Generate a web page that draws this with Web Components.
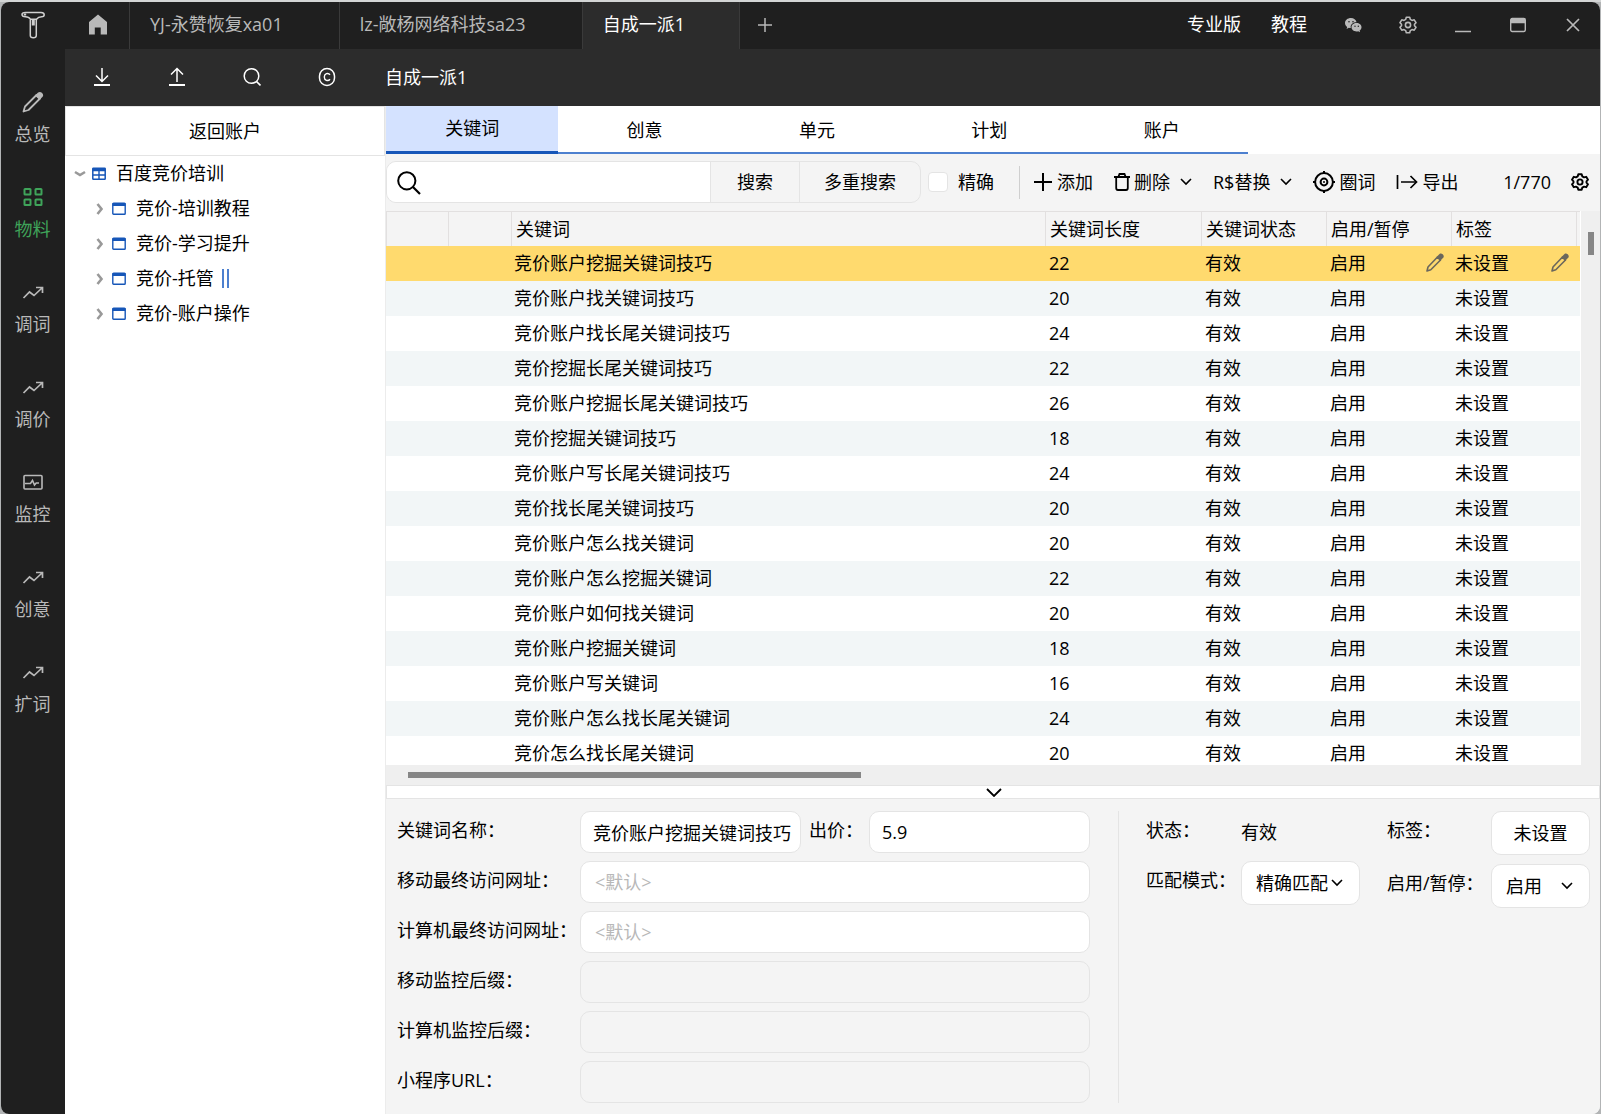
<!DOCTYPE html>
<html lang="zh-CN">
<head>
<meta charset="utf-8">
<title>自成一派1</title>
<style>
  :root {
    --bar: #1f1f1f; --bar-2: #2c2c2c; --bar-text: #b9b9b9;
    --green: #3fa45a; --blue: #1656b8; --blue-soft: #4d80cf;
    --panel: #f4f4f4; --line: #e4e4e4; --select: #ffda6e; --stripe: #f2f6f7;
  }
  html, body { margin: 0; height: 100%; background: #cfd0d0; }
  body { font: 18px/24px "Open Sans", "Noto Sans CJK SC", sans-serif; color: #000; }
</style>
</head>
<body>
<app-window></app-window>

<script>
const RESET = `
  *, *::before, *::after { box-sizing: border-box; }
  :host { display: block; box-sizing: border-box; }
  :host([hidden]) { display: none; }
  button, input, select { font: inherit; color: inherit; margin: 0; padding: 0; border: 0; background: none; border-radius: 0; outline: 0; }
  button { cursor: pointer; }
`;

function define(name, css, html, setup) {
  const template = document.createElement('template');
  customElements.define(name, class extends HTMLElement {
    constructor() {
      super();
      this.attachShadow({ mode: 'open' });
    }
    connectedCallback() {
      if (this.shadowRoot.childNodes.length) return;
      template.innerHTML = `<style>${RESET}${css}</style>${typeof html === 'function' ? html(this) : html}`;
      this.shadowRoot.append(template.content.cloneNode(true));
      if (setup) setup(this);
    }
  });
}

/* Each icon: [width, height, markup] */
const GEAR = '<path d="M7.3 1.2h3.4l.6 2.2 1.7 1 2.2-.6 1.8 2.9-1.5 1.6v1.4l1.5 1.6-1.8 2.9-2.2-.6-1.7 1-.6 2.2H7.3l-.6-2.2-1.7-1-2.2.6L1 11.300l1.500-1.600V8.300L1 6.700l1.800-2.900 2.200.6 1.700-1z" stroke-linejoin="round"/><circle cx="9" cy="9" r="2.600"/>';
const ICONS = {
  logo: [24, 28, '<path d="M1 3.500C1 1.500 3 1.500 4.500 1.500H20c2.500 0 3.200 1.200 3.200 2.300 0 1.300-1 2-2.500 2-3.200 0-4.200 1-5.200 2.400H9.300C8.300 6.500 7 5.800 4.500 5.800 2.500 5.800 1 5.500 1 3.500z" stroke-width="1.500"/><path d="M2.800 3.600h2.400" stroke-width="2"/><path d="M9.300 9v15.500c0 3 6 3 6 0V9" stroke-width="1.500"/><path d="M12.300 9v5.500" stroke-width="3"/>'],
  home: [20, 21, '<path d="M10 .5 1 8v12.500h5.800V13.500h5.900v7H19V8z" fill="currentColor" stroke="none"/>'],
  pencil: [22, 22, '<path d="M1.500 20.500 3 15.500 14.500 4l3.500 3.500L6.500 19z" stroke-width="1.800" stroke-linejoin="round"/><path d="m13 4.500 3.100-3c2.500-2 6.500 1.500 4.500 4.200L17.500 9z" fill="currentColor" stroke="none"/>'],
  pen: [18, 19, '<path d="M1 18 2 14 11.500 4l3 3L4.800 16.800z" stroke-width="1.600" stroke-linejoin="round"/><path d="m10.500 4 3-3c2-1.600 5.300 1.200 3.900 3.600L14 8z" fill="currentColor" stroke="none"/>'],
  grid: [22, 22, '<g stroke-width="2"><rect x="2.500" y="3" width="6" height="5.500" rx=".6"/><rect x="13.500" y="3" width="6" height="5.500" rx=".6"/><rect x="2.500" y="13.500" width="6" height="5.500" rx=".6"/><rect x="13.500" y="13.500" width="6" height="5.500" rx=".6"/></g>'],
  trend: [22, 22, '<path d="m1.500 17 6-6 4.500 3.500L20 7M14 6.500h6.500V12" stroke-width="1.700"/>'],
  monitor: [22, 22, '<rect x="2" y="4.500" width="18" height="13.500" rx="1" stroke-width="1.600"/><path d="M3 12.500h5.500l2-3 2 4.500 1.700-2H17" stroke-width="1.600"/>'],
  plusThin: [14, 14, '<path d="M7 0v14M0 7h14" stroke-width="1.500"/>'],
  wechat: [18, 16, '<path d="M7 1C3.600 1 1 3.200 1 6c0 1.600.9 3 2.200 3.900L2.600 12l2.300-1.200c.6.100 1.200.2 1.900.2C6 7.500 9 5 12.600 5.200 12 2.800 9.800 1 7 1z" fill="currentColor" stroke="none"/><path d="M12.500 6c-2.800 0-5 1.900-5 4.200s2.200 4.200 5 4.200c.6 0 1.200-.1 1.700-.2l1.900 1-.5-1.700c1.200-.8 1.900-2 1.900-3.300 0-2.300-2.200-4.200-5-4.200z" fill="currentColor" stroke="none"/><g fill="#1f1f1f" stroke="none"><circle cx="5" cy="4.800" r=".8"/><circle cx="9" cy="4.800" r=".8"/><circle cx="11" cy="9.200" r=".7"/><circle cx="14.300" cy="9.200" r=".7"/></g>'],
  gear: [18, 18, `<g stroke-width="1.600">${GEAR}</g>`],
  gearBold: [18, 18, `<g stroke-width="1.900">${GEAR}</g>`],
  minimize: [16, 16, '<path d="M0 14.500h16" stroke-width="1.300"/>'],
  maximize: [16, 16, '<rect x=".7" y="1.500" width="14.600" height="13" rx="1.500" stroke-width="1.400"/><path d="M1 1.500h14v4.700H1z" fill="currentColor" stroke="none"/>'],
  close: [14, 14, '<path d="m1 1 12 12M13 1 1 13" stroke-width="1.700"/>'],
  download: [18, 20, '<path d="M9 1v13M3 8.500l6 6 6-6" stroke-width="1.500"/><path d="M1 18h16" stroke-width="1.800"/>'],
  upload: [18, 20, '<path d="M9 15V2M3 7.500l6-6 6 6" stroke-width="1.500"/><path d="M1 18h16" stroke-width="1.800"/>'],
  search: [18, 20, '<circle cx="8.500" cy="9" r="7.300" stroke-width="1.500"/><path d="m13.500 14.500 4 4" stroke-width="1.700"/>'],
  copyright: [18, 20, '<rect x="1.500" y="1.500" width="15" height="17" rx="7.500" stroke-width="1.500"/><path d="M12 7.800c-2-2.600-5.700-1.200-5.700 2.200s3.700 4.800 5.700 2.200" stroke-width="1.400"/>'],
  searchBold: [24, 24, '<circle cx="9.800" cy="9.800" r="8.600" stroke-width="2"/><path d="m16 16 7 7" stroke-width="2.200"/>'],
  plus: [18, 18, '<path d="M9 0v18M0 9h18" stroke-width="2"/>'],
  trash: [16, 18, '<path d="M0 4h16" stroke-width="1.800"/><path d="M4.500 3.500 5.500 1h5l1 2.500M2.200 4.500V15c0 1.300.5 2 1.800 2h8c1.300 0 1.800-.7 1.800-2V4.500" stroke-width="1.800"/>'],
  chevron: [12, 8, '<path d="m1 1 5 5 5-5" stroke-width="1.600"/>'],
  chevronWide: [16, 9, '<path d="m1 1 7 7 7-7" stroke-width="1.800"/>'],
  target: [22, 22, '<circle cx="11" cy="11" r="8.900" stroke-width="2"/><circle cx="11" cy="11" r="3.400" stroke-width="2"/><path d="M11 0v3M11 19v3M0 11h3M19 11h3" stroke-width="2"/><circle cx="11" cy="11" r="1" fill="currentColor" stroke="none"/>'],
  export: [22, 16, '<path d="M1.500 1v14M5 8h15" stroke-width="1.700"/><path d="m14.500 2 6 6-6 6" stroke-width="1.700"/>'],
  treeOpen: [12, 8, '<path d="m1 2 5 3 5-3" stroke-width="2.600"/>'],
  treeClosed: [8, 12, '<path d="m1.500 1 4 5-4 5" stroke-width="2.600"/>'],
  table: [14, 14, '<rect x=".8" y="1.300" width="12.400" height="11" rx=".6" stroke-width="1.500"/><path d="M.5 1h13v3.200H.5z" fill="currentColor" stroke="none"/><path d="M7 3v9M1 8h12" stroke-width="1.400"/>'],
  folder: [14, 14, '<rect x=".8" y="1.300" width="12.400" height="11" rx=".8" stroke-width="1.400"/><path d="M.5 1h13v3H.5z" fill="currentColor" stroke="none"/>'],
};

define('ui-icon', `:host { display: inline-block; flex: none; } svg { display: block; }`, el => {
  const [w, h, body] = ICONS[el.getAttribute('name')];
  return `<svg width="${w}" height="${h}" viewBox="0 0 ${w} ${h}" fill="none" stroke="currentColor" aria-hidden="true">${body}</svg>`;
});

/* ---------- window ---------- */
define('app-window', `
  :host { height: 100vh; padding: 2px 1px 0; background: linear-gradient(#d3d5d5 2px, #b2b4b5 2px); }
  .frame { height: 100%; display: grid; grid-template: auto auto minmax(0, 1fr) / 64px 320px minmax(0, 1fr); border-radius: 8px; overflow: hidden; background: var(--panel); }
  side-nav { grid-row: 1 / -1; }
  title-bar, tool-bar { grid-column: 2 / -1; }
  main { display: flex; flex-direction: column; min-width: 0; min-height: 0; border-left: 1px solid #ececec; background: var(--panel); }
  keyword-table { flex: 1; min-height: 0; }
`, `
  <div class="frame">
    <side-nav></side-nav>
    <title-bar></title-bar>
    <tool-bar></tool-bar>
    <account-tree></account-tree>
    <main>
      <entity-tabs></entity-tabs>
      <action-bar></action-bar>
      <keyword-table></keyword-table>
      <split-handle></split-handle>
      <detail-panel></detail-panel>
    </main>
  </div>
`);

/* ---------- sidebar ---------- */
define('nav-item', `
  button { display: flex; flex-direction: column; align-items: center; gap: 9px; width: 100%; height: 95px; padding-top: 20px; color: var(--bar-text); }
  :host([active]) button { color: var(--green); }
`, el => `<button type="button"><ui-icon name="${el.getAttribute('icon')}"></ui-icon><slot></slot></button>`);

define('side-nav', `
  :host { background: var(--bar); color: #d0d0d0; padding-right: 1px; }
  .logo { display: flex; justify-content: center; padding: 9px 0 32px; }
`, `
  <div class="logo"><ui-icon name="logo"></ui-icon></div>
  <nav>
    <nav-item icon="pencil">总览</nav-item>
    <nav-item icon="grid" active>物料</nav-item>
    <nav-item icon="trend">调词</nav-item>
    <nav-item icon="trend">调价</nav-item>
    <nav-item icon="monitor">监控</nav-item>
    <nav-item icon="trend">创意</nav-item>
    <nav-item icon="trend">扩词</nav-item>
  </nav>
`);

/* ---------- title bar ---------- */
define('title-bar', `
  :host { display: flex; height: 47px; background: var(--bar); color: var(--bar-text); }
  button { display: flex; align-items: center; justify-content: center; height: 100%; padding-bottom: 2px; }
  .home { width: 65px; padding-left: 2px; border-right: 1px solid #3a3a3a; }
  .tab { justify-content: flex-start; padding: 0 56px 3px 20px; border-right: 1px solid #3a3a3a; white-space: nowrap; }
  .tab.on { background: var(--bar-2); color: #fff; padding-right: 54px; }
  .new { width: 50px; }
  .right { display: flex; margin-left: auto; }
  .right > button { width: 55px; }
  .links { display: flex; gap: 30px; margin-right: 18px; color: #fff; }
  .links button { padding-bottom: 3px; }
`, `
  <button class="home" type="button" aria-label="主页"><ui-icon name="home"></ui-icon></button>
  <button class="tab" type="button">YJ-永赞恢复xa01</button>
  <button class="tab" type="button">lz-敞杨网络科技sa23</button>
  <button class="tab on" type="button">自成一派1</button>
  <button class="new" type="button" aria-label="新建"><ui-icon name="plusThin"></ui-icon></button>
  <div class="right">
    <div class="links"><button type="button">专业版</button><button type="button">教程</button></div>
    <button type="button" aria-label="微信"><ui-icon name="wechat"></ui-icon></button>
    <button type="button" aria-label="设置"><ui-icon name="gear"></ui-icon></button>
    <button type="button" aria-label="最小化"><ui-icon name="minimize"></ui-icon></button>
    <button type="button" aria-label="最大化"><ui-icon name="maximize"></ui-icon></button>
    <button type="button" aria-label="关闭"><ui-icon name="close"></ui-icon></button>
  </div>
`);

define('tool-bar', `
  :host { display: flex; align-items: center; gap: 49px; height: 57px; padding: 0 28px 2px; background: var(--bar-2); color: #fff; }
  .tools { display: flex; gap: 57px; }
  .tools button { display: flex; }
`, `
  <div class="tools">
    <button type="button" aria-label="下载"><ui-icon name="download"></ui-icon></button>
    <button type="button" aria-label="上传"><ui-icon name="upload"></ui-icon></button>
    <button type="button" aria-label="查找"><ui-icon name="search"></ui-icon></button>
    <button type="button" aria-label="版权"><ui-icon name="copyright"></ui-icon></button>
  </div>
  <span>自成一派1</span>
`);

/* ---------- tree ---------- */
define('tree-node', `
  .row { display: flex; align-items: center; height: 35px; padding-left: 9px; white-space: nowrap; }
  :host([child]) .row { padding-left: 31px; }
  .row > * + ui-icon { margin-left: 6px; color: var(--blue); }
  :host([child]) .row > * + ui-icon { margin-left: 8px; }
  .mark { color: #999; }
  .text { margin-left: 10px; padding-bottom: 1px; }
  .pause { display: none; width: 7px; height: 19px; margin-left: 8px; border: solid var(--blue-soft); border-width: 0 2px; }
  :host([paused]) .pause { display: block; }
`, el => {
  const child = el.hasAttribute('child');
  return `<div class="row"><ui-icon class="mark" name="${child ? 'treeClosed' : 'treeOpen'}"></ui-icon><ui-icon name="${child ? 'folder' : 'table'}"></ui-icon><span class="text"><slot></slot></span><i class="pause"></i></div>`;
});

define('account-tree', `
  :host { background: #fff; }
  .back { display: block; width: 100%; height: 50px; border: 1px solid var(--line); padding-bottom: 1px; }
`, `
  <button class="back" type="button">返回账户</button>
  <tree-node>百度竞价培训</tree-node>
  <tree-node child>竞价-培训教程</tree-node>
  <tree-node child>竞价-学习提升</tree-node>
  <tree-node child paused>竞价-托管</tree-node>
  <tree-node child>竞价-账户操作</tree-node>
`);

/* ---------- entity tabs ---------- */
define('entity-tabs', `
  :host { height: 48px; background: #fff; }
  .tabs { display: grid; grid-template-columns: repeat(5, 1fr); width: 71%; height: 100%; }
  button { border-bottom: 2px solid var(--blue-soft); padding-top: 2px; }
  button[aria-selected="true"] { background: #d4e2ff; border-bottom: 3px solid var(--blue); padding: 0 0 1px; }
`, `
  <div class="tabs" role="tablist">
    <button type="button" role="tab" aria-selected="true">关键词</button>
    <button type="button" role="tab">创意</button>
    <button type="button" role="tab">单元</button>
    <button type="button" role="tab">计划</button>
    <button type="button" role="tab">账户</button>
  </div>
`);

/* ---------- search and actions ---------- */
define('action-bar', `
  :host { display: flex; align-items: center; padding: 7px 11px 8px 0; white-space: nowrap; }
  .search { display: flex; flex: 0 1 535px; height: 42px; border: 1px solid var(--line); border-radius: 10px; overflow: hidden; }
  .box { display: flex; align-items: center; flex: 1; min-width: 0; padding: 2px 0 0 10px; gap: 8px; background: #fff; }
  .box input { flex: 1; min-width: 0; height: 100%; }
  .search button { border-left: 1px solid var(--line); padding: 0 24px; }
  .search .one { padding: 0 26px; }
  .exact { display: flex; align-items: center; gap: 10px; margin-left: 7px; }
  .exact input { appearance: none; width: 20px; height: 20px; background: #fff; border: 1px solid var(--line); border-radius: 4px; }
  .actions { display: flex; align-items: center; gap: 21px; margin-left: 25px; padding-left: 14px; height: 33px; border-left: 1px solid #cfcfcf; }
  .actions button { display: flex; align-items: center; gap: 5px; }
  .pair { display: flex; align-items: center; gap: 10px; }
  .actions .near { gap: 4px; }
  .actions .tight { gap: 0; }
  .count { margin-left: auto; }
  .gear { display: flex; margin-left: 20px; }
`, `
  <div class="search">
    <label class="box"><ui-icon name="searchBold"></ui-icon><input type="text" aria-label="搜索关键词"></label>
    <button class="one" type="button">搜索</button>
    <button type="button">多重搜索</button>
  </div>
  <label class="exact"><input type="checkbox">精确</label>
  <div class="actions">
    <button type="button"><ui-icon name="plus"></ui-icon>添加</button>
    <div class="pair">
      <button class="near" type="button"><ui-icon name="trash"></ui-icon>删除</button>
      <button type="button" aria-label="删除选项"><ui-icon name="chevron"></ui-icon></button>
    </div>
    <div class="pair">
      <button class="tight" type="button"><span>R$</span>替换</button>
      <button type="button" aria-label="替换选项"><ui-icon name="chevron"></ui-icon></button>
    </div>
    <button class="near" type="button"><ui-icon name="target"></ui-icon>圈词</button>
    <button class="near" type="button"><ui-icon name="export"></ui-icon>导出</button>
  </div>
  <span class="count">1/770</span>
  <button class="gear" type="button" aria-label="列设置"><ui-icon name="gearBold"></ui-icon></button>
`);

/* ---------- table ---------- */
const KEYWORDS = [
  ['竞价账户挖掘关键词技巧', 22], ['竞价账户找关键词技巧', 20], ['竞价账户找长尾关键词技巧', 24],
  ['竞价挖掘长尾关键词技巧', 22], ['竞价账户挖掘长尾关键词技巧', 26], ['竞价挖掘关键词技巧', 18],
  ['竞价账户写长尾关键词技巧', 24], ['竞价找长尾关键词技巧', 20], ['竞价账户怎么找关键词', 20],
  ['竞价账户怎么挖掘关键词', 22], ['竞价账户如何找关键词', 20], ['竞价账户挖掘关键词', 18],
  ['竞价账户写关键词', 16], ['竞价账户怎么找长尾关键词', 24], ['竞价怎么找长尾关键词', 20],
];

define('keyword-table', `
  :host { display: grid; grid-template: minmax(0, 1fr) 20px / minmax(0, 1fr) 20px; }
  .view { overflow: hidden; background: #fff; }
  table { width: 100%; table-layout: fixed; border-collapse: separate; border-spacing: 0; }
  th, td { height: 35px; padding: 0 0 2px 4px; text-align: left; font-weight: 400; white-space: nowrap; }
  td { padding-left: 3px; }
  td:nth-child(n + 4) { padding-left: 4px; }
  th { background: var(--panel); border: solid #e2e0e0; border-width: 1px 0 0 1px; padding-bottom: 1px; }
  tbody tr:nth-child(even) td { background: var(--stripe); }
  tbody tr.on td { background: var(--select); }
  .cell { display: flex; align-items: center; justify-content: space-between; padding-right: 7px; }
  .cell button { display: flex; color: #6b675c; }
  .v { background: #efefef; margin-left: 1px; padding: 21px 6px 0 7px; box-shadow: -1px 0 #fff; }
  .v i { display: block; height: 23px; background: #868686; }
  .h { grid-column: 1 / -1; background: #efefef; padding: 7px 0 0 22px; }
  .h i { display: block; width: 38%; height: 6px; background: #868686; }
`, `
  <div class="view">
    <table>
      <colgroup><col style="width:62px"><col style="width:63px"><col><col style="width:156px"><col style="width:125px"><col style="width:125px"><col style="width:125px"><col style="width:4px"></colgroup>
      <thead><tr><th></th><th></th><th>关键词</th><th>关键词长度</th><th>关键词状态</th><th>启用/暂停</th><th>标签</th><th></th></tr></thead>
      <tbody></tbody>
    </table>
  </div>
  <div class="v"><i></i></div>
  <div class="h"><i></i></div>
`, el => {
  const edit = '<button type="button" aria-label="编辑"><ui-icon name="pen"></ui-icon></button>';
  el.shadowRoot.querySelector('tbody').innerHTML = KEYWORDS.map(([word, length], i) => `
    <tr${i ? '' : ' class="on"'}><td></td><td></td><td>${word}</td><td>${length}</td><td>有效</td>
    <td><div class="cell">启用${i ? '' : edit}</div></td><td><div class="cell">未设置${i ? '' : edit}</div></td><td></td></tr>`).join('');
});

define('split-handle', `
  button { display: flex; align-items: center; justify-content: center; width: 100%; height: 14px; padding: 1px 0 0 2px; background: #fff; border: 1px solid var(--line); }
`, `<button type="button" aria-label="收起"><ui-icon name="chevronWide"></ui-icon></button>`);

/* ---------- details ---------- */
define('text-field', `
  :host { display: flex; align-items: center; min-width: 0; }
  label { flex: none; width: var(--label-width, 183px); padding-bottom: 4px; white-space: nowrap; }
  input { flex: 1; min-width: 0; height: 42px; padding: 0 6px 0 12px; background: #fff; border: 1px solid var(--line); border-radius: 10px; }
  input:placeholder-shown { padding-left: 14px; }
  input::placeholder { color: #b8b8b8; opacity: 1; }
  input:disabled { background: transparent; }
`, el => {
  const get = name => el.getAttribute(name) || '';
  return `<label for="f">${get('label')}</label><input id="f" type="text" value="${get('value')}" placeholder="${get('placeholder')}"${el.hasAttribute('disabled') ? ' disabled' : ''}>`;
});

define('drop-down', `
  :host { display: grid; align-items: center; }
  select { grid-area: 1 / 1; appearance: none; width: 100%; height: 44px; padding-left: 14px; background: #fff; border: 1px solid var(--line); border-radius: 10px; }
  ui-icon { grid-area: 1 / 1; justify-self: end; margin-right: 17px; pointer-events: none; }
`, el => `<select aria-label="${el.getAttribute('label')}"><option>${el.getAttribute('value')}</option></select><ui-icon name="chevron"></ui-icon>`);

define('detail-panel', `
  :host { display: flex; padding: 12px 10px 11px 11px; }
  .fields { display: flex; flex-direction: column; gap: 8px; flex: 0 1 693px; min-width: 0; }
  .two { display: flex; gap: 8px; }
  .two text-field:first-child { flex: 0 1 404px; }
  .two text-field:last-child { flex: 1; --label-width: 60px; }
  .side { display: flex; justify-content: space-between; flex: 1; margin-left: 28px; padding-left: 27px; border-left: 1px solid var(--line); white-space: nowrap; }
  .pairs { display: grid; grid-template-columns: 95px 119px; grid-auto-rows: max-content; gap: 8px 0; line-height: 38px; }
  .pairs.tags { grid-template-columns: 104px 99px; row-gap: 9px; }
  .val { line-height: 42px; }
  .tag { height: 44px; background: #fff; border: 1px solid var(--line); border-radius: 10px; }
`, `
  <div class="fields">
    <div class="two">
      <text-field label="关键词名称：" value="竞价账户挖掘关键词技巧"></text-field>
      <text-field label="出价：" value="5.9"></text-field>
    </div>
    <text-field label="移动最终访问网址：" placeholder="&lt;默认&gt;"></text-field>
    <text-field label="计算机最终访问网址：" placeholder="&lt;默认&gt;"></text-field>
    <text-field label="移动监控后缀：" disabled></text-field>
    <text-field label="计算机监控后缀：" disabled></text-field>
    <text-field label="小程序URL：" disabled></text-field>
  </div>
  <div class="side">
    <div class="pairs">
      <span>状态：</span><span class="val">有效</span>
      <span>匹配模式：</span><drop-down label="匹配模式" value="精确匹配"></drop-down>
    </div>
    <div class="pairs tags">
      <span>标签：</span><button class="tag" type="button">未设置</button>
      <span>启用/暂停：</span><drop-down label="启用/暂停" value="启用"></drop-down>
    </div>
  </div>
`);
</script>
</body>
</html>
